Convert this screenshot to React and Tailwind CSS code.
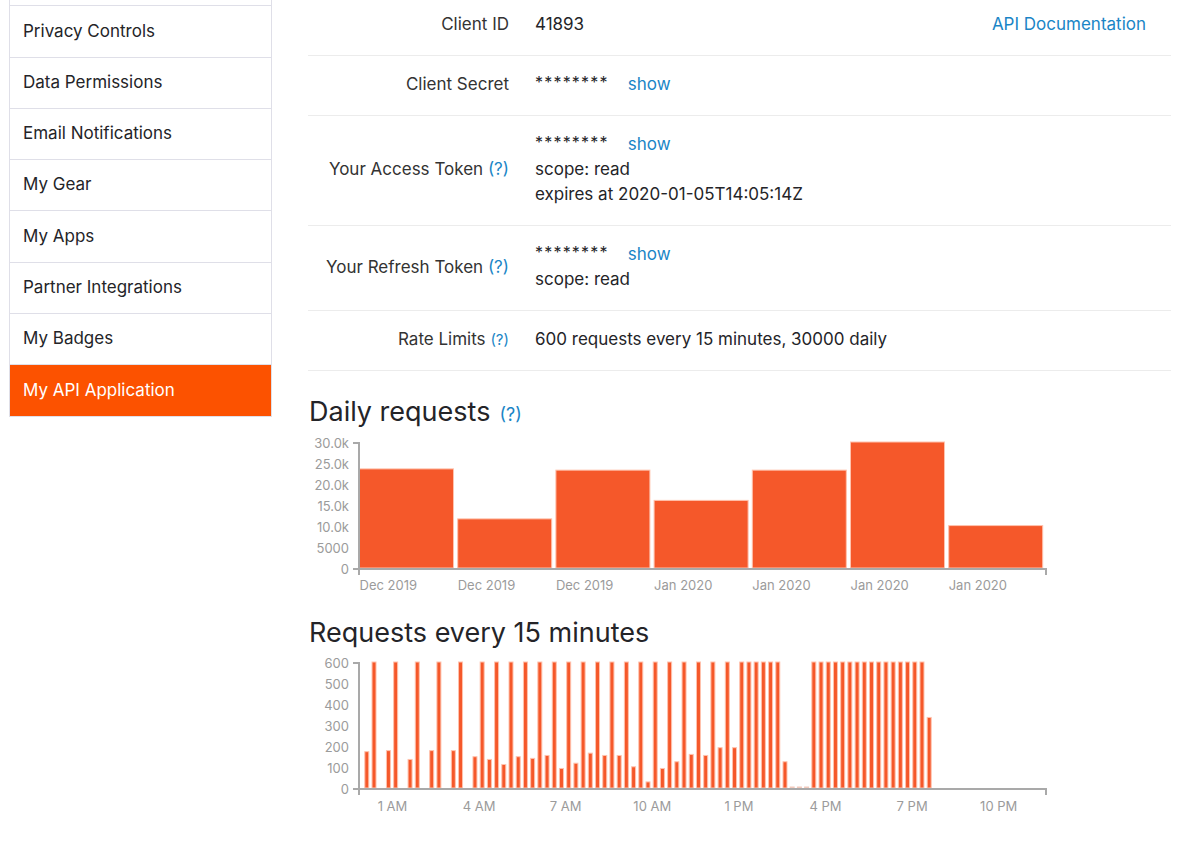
import React from 'react'

const NAV = [
  { label: 'Privacy Controls', h: 'h-[52px]' },
  { label: 'Data Permissions', h: 'h-[51px]' },
  { label: 'Email Notifications', h: 'h-[51px]' },
  { label: 'My Gear', h: 'h-[51px]' },
  { label: 'My Apps', h: 'h-[52px]' },
  { label: 'Partner Integrations', h: 'h-[51px]' },
  { label: 'My Badges', h: 'h-[51px]' },
  { label: 'My API Application', h: 'h-[52px]', active: true },
]

const DAILY = [
  { v: 23600, label: 'Dec 2019' },
  { v: 11700, label: 'Dec 2019' },
  { v: 23300, label: 'Dec 2019' },
  { v: 16100, label: 'Jan 2020' },
  { v: 23300, label: 'Jan 2020' },
  { v: 30000, label: 'Jan 2020' },
  { v: 10100, label: 'Jan 2020' },
]

// 96 fifteen-minute slots
const QUARTER = (() => {
  const d = new Array(96).fill(0)
  const set = {
    1: 173, 2: 600, 4: 178, 5: 600, 7: 136, 8: 600, 10: 178, 11: 600, 13: 178, 14: 600,
    16: 149, 17: 600, 18: 136, 19: 600, 20: 112, 21: 600, 22: 149, 23: 600, 24: 141, 25: 600,
    26: 155, 27: 600, 28: 93, 29: 600, 30: 118, 31: 600, 32: 166, 33: 600, 34: 155, 35: 600,
    36: 155, 37: 600, 38: 101, 39: 600, 40: 29, 41: 600, 42: 93, 43: 600, 44: 125, 45: 600,
    46: 160, 47: 600, 48: 155, 49: 600, 50: 192, 51: 600, 52: 192, 59: 125, 79: 336,
  }
  Object.entries(set).forEach(([k, v]) => (d[k] = v))
  for (let i = 53; i <= 58; i++) d[i] = 600
  for (let i = 63; i <= 78; i++) d[i] = 600
  for (let i = 60; i <= 62; i++) d[i] = -1
  return d
})()

const FONT = 'Inter, "Liberation Sans", sans-serif'
const AXIS = '#a9a9a9'
const TICK = '#9b9b9b'
const BAR = '#f5582a'
const BAR_EDGE = '#ffc2ad'

function Help({ className = '' }) {
  return <span className={`text-[#1a85c6] ${className}`}>(?)</span>
}

function Row({ label, children, first, extra }) {
  return (
    <div
      className={`flex items-center border-b border-[#ececec] pb-[18px] leading-[25px] ${first ? 'pt-[12px]' : 'pt-4'}`}
    >
      <div className="w-[201px] shrink-0 text-right text-[#333]">{label}</div>
      <div className="flex-1 pl-[26px]">{children}</div>
      {extra}
    </div>
  )
}

function Secret() {
  return (
    <div className="flex items-center">
      <span className="text-[16px] tracking-[1.2px] -mt-[4px]">********</span>
      <a className="ml-[19px] text-[#1a85c6]">show</a>
    </div>
  )
}

function Axes({ yLabels }) {
  return (
    <g>
      <path d="M45,14 H51 V146" fill="none" stroke={AXIS} strokeWidth="2" />
      <path d="M45,140 H51" fill="none" stroke={AXIS} strokeWidth="2" />
      <path d="M51,140 H738 V146" fill="none" stroke={AXIS} strokeWidth="2" />
      {yLabels.map((t, i) => (
        <text
          key={t}
          x="41"
          y={14 + i * 21 + 4.5}
          textAnchor="end"
          fontSize="13"
          fill={TICK}
          fontFamily={FONT}
        >
          {t}
        </text>
      ))}
    </g>
  )
}

function DailyChart() {
  return (
    <svg width="752" height="188" className="block">
      {DAILY.map((b, i) => {
        const h = (b.v / 30000) * 126
        const x = 51.5 + i * 98.2
        return (
          <g key={i}>
            <rect x={x} y={139 - h} width="94" height={h} fill={BAR} stroke={BAR_EDGE} strokeWidth="1" />
            <text x={x} y="160.5" fontSize="13" fill={TICK} fontFamily={FONT}>
              {b.label}
            </text>
          </g>
        )
      })}
      <Axes yLabels={['30.0k', '25.0k', '20.0k', '15.0k', '10.0k', '5000', '0']} />
    </svg>
  )
}

function QuarterChart() {
  const hours = ['1 AM', '4 AM', '7 AM', '10 AM', '1 PM', '4 PM', '7 PM', '10 PM']
  return (
    <svg width="752" height="190" className="block">
      {QUARTER.map((v, i) => {
        if (v === 0) return null
        const c = 51.6 + i * 7.21
        if (v < 0)
          return <rect key={i} x={c - 2.5} y="137.5" width="5" height="1.5" fill="#f2c9bc" />
        const h = (v / 600) * 126
        return (
          <rect key={i} x={c - 2} y={139 - h} width="4" height={h} fill={BAR} stroke={BAR_EDGE} strokeWidth="1" />
        )
      })}
      <Axes yLabels={['600', '500', '400', '300', '200', '100', '0']} />
      {hours.map((t, k) => (
        <text
          key={t}
          x={84.5 + k * 86.6}
          y="161.5"
          textAnchor="middle"
          fontSize="13"
          fill={TICK}
          fontFamily={FONT}
        >
          {t}
        </text>
      ))}
    </svg>
  )
}

export default function App() {
  return (
    <div
      className="flex min-h-[853px] bg-white text-[17px] text-[#242428]"
      style={{ fontFamily: FONT }}
    >
      <aside className="ml-[9px] w-[263px] shrink-0">
        <div className="border-x border-b border-[#dfdfe8]">
          <div className="h-[5px]" />
          {NAV.map((n) => (
            <div
              key={n.label}
              className={`flex items-center border-t border-[#dfdfe8] pl-[13px] ${n.h} ${
                n.active ? 'bg-[#fc5200] text-white' : 'text-[#242428]'
              }`}
            >
              {n.label}
            </div>
          ))}
        </div>
      </aside>

      <main className="ml-[36px] w-[863px]">
        <Row
          first
          label="Client ID"
          extra={<a className="pr-[25px] text-[#1a85c6]">API Documentation</a>}
        >
          41893
        </Row>
        <Row label="Client Secret">
          <Secret />
        </Row>
        <Row
          label={
            <>
              Your Access Token <Help />
            </>
          }
        >
          <Secret />
          <div>scope: read</div>
          <div>expires at 2020-01-05T14:05:14Z</div>
        </Row>
        <Row
          label={
            <>
              Your Refresh Token <Help />
            </>
          }
        >
          <Secret />
          <div>scope: read</div>
        </Row>
        <Row
          label={
            <>
              Rate Limits <Help className="text-[15px]" />
            </>
          }
        >
          600 requests every 15 minutes, 30000 daily
        </Row>

        <h2 className="mt-[26px] flex items-baseline pl-[1px] text-[27px] leading-[29px] font-normal">
          Daily requests
          <Help className="ml-[9px] text-[18px]" />
        </h2>
        <DailyChart />

        <h2 className="pl-[1px] text-[27px] leading-[32px] font-normal">Requests every 15 minutes</h2>
        <QuarterChart />
      </main>
    </div>
  )
}
